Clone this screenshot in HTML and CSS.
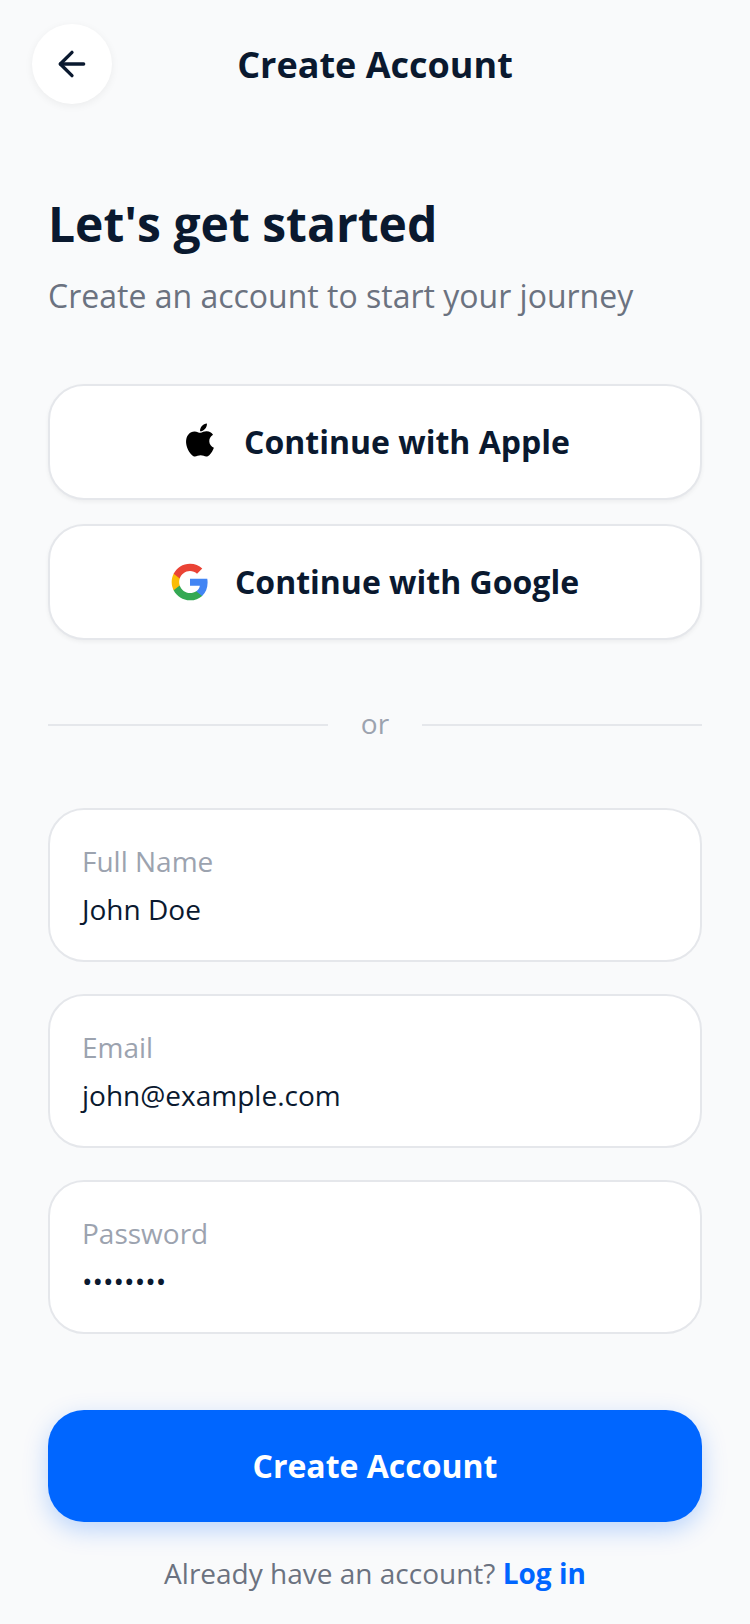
FILE: index.html
```html
<!DOCTYPE html>
<html lang="en">
<head>
<meta charset="utf-8">
<title>Create Account</title>
<link rel="stylesheet" href="styles.css">
</head>
<body>
<main class="screen">
  <header class="topbar">
    <button class="back" aria-label="Back">
      <svg class="back-icon" viewBox="0 0 24 24" fill="none" stroke="#0a192f" stroke-width="2" stroke-linecap="round" stroke-linejoin="round"><path d="M19 12H5"/><path d="M12 19l-7-7 7-7"/></svg>
    </button>
    <div class="topbar-title">Create Account</div>
  </header>
  <h1 class="heading">Let's get started</h1>
  <p class="sub">Create an account to start your journey</p>
  <div class="socials">
    <button class="social">
      <svg class="apple" viewBox="0 0 24 24" fill="#000"><path d="M17.05 20.28c-.98.95-2.05.8-3.08.35-1.09-.46-2.09-.48-3.24 0-1.44.62-2.2.44-3.06-.35C2.79 15.25 3.51 7.59 9.05 7.31c1.35.07 2.29.74 3.08.8 1.18-.24 2.31-.93 3.57-.84 1.51.12 2.65.72 3.4 1.8-3.12 1.87-2.38 5.98.48 7.13-.57 1.5-1.31 2.99-2.54 4.09zM12.03 7.25c-.15-2.23 1.66-4.07 3.74-4.25.29 2.58-2.34 4.5-3.74 4.25z"/></svg>
      <span>Continue with Apple</span>
    </button>
    <button class="social">
      <svg class="google" viewBox="0 0 24 24"><path fill="#4285F4" d="M22.56 12.25c0-.78-.07-1.53-.2-2.25H12v4.26h5.92c-.26 1.37-1.04 2.53-2.21 3.31v2.77h3.57c2.08-1.92 3.28-4.74 3.28-8.09z"/><path fill="#34A853" d="M12 23c2.97 0 5.46-.98 7.28-2.66l-3.57-2.77c-.98.66-2.23 1.06-3.71 1.06-2.86 0-5.29-1.93-6.16-4.53H2.18v2.84C3.99 20.53 7.7 23 12 23z"/><path fill="#FBBC05" d="M5.84 14.09c-.22-.66-.35-1.36-.35-2.09s.13-1.43.35-2.09V7.07H2.18C1.43 8.55 1 10.22 1 12s.43 3.45 1.18 4.93l3.66-2.84z"/><path fill="#EA4335" d="M12 5.38c1.62 0 3.06.56 4.21 1.64l3.15-3.15C17.45 2.09 14.97 1 12 1 7.7 1 3.99 3.47 2.18 7.07l3.66 2.84c.87-2.6 3.3-4.53 6.16-4.53z"/></svg>
      <span>Continue with Google</span>
    </button>
  </div>
  <div class="divider"><span class="rule"></span><span class="or">or</span><span class="rule"></span></div>
  <div class="fields">
    <div class="field"><div class="label">Full Name</div><div class="value">John Doe</div></div>
    <div class="field"><div class="label">Email</div><div class="value">john@example.com</div></div>
    <div class="field"><div class="label">Password</div><div class="value">••••••••</div></div>
  </div>
  <button class="primary">Create Account</button>
  <p class="footer">Already have an account? <a class="login" href="#">Log in</a></p>
</main>
</body>
</html>
```
FILE: styles.css
```css
* { box-sizing: border-box; }
html, body { margin: 0; padding: 0; }
body {
  width: 750px;
  height: 1624px;
  background: #f9fafb;
  font-family: "Open Sans", sans-serif;
  color: #0a192f;
  overflow: hidden;
}
button { font-family: inherit; cursor: pointer; }
.screen { display: flex; flex-direction: column; padding: 24px 48px 0; }
.topbar {
  position: relative;
  height: 80px;
  display: flex;
  align-items: center;
  justify-content: center;
}
.back {
  position: absolute;
  left: -16px;
  top: 0;
  width: 80px;
  height: 80px;
  border-radius: 50%;
  border: 0;
  background: #fff;
  box-shadow: 0 2px 8px rgba(0,0,0,0.06);
  display: flex;
  align-items: center;
  justify-content: center;
  padding: 0;
}
.back-icon { width: 40px; height: 40px; }
.topbar-title { font-size: 36px; font-weight: 700; line-height: 48px; padding-top: 2px; }
.heading { margin: 88px 0 0; font-size: 48px; font-weight: 700; line-height: 64px; }
.sub { margin: 18px 0 0; font-size: 32px; line-height: 44px; color: #6b7280; }
.socials { display: flex; flex-direction: column; gap: 24px; margin-top: 66px; }
.social {
  height: 116px;
  border-radius: 36px;
  border: 2px solid #e5e7eb;
  background: #fff;
  box-shadow: 0 2px 4px rgba(0,0,0,0.05);
  display: flex;
  align-items: center;
  justify-content: center;
  gap: 24px;
  font-size: 32px;
  font-weight: 700;
  color: #0a192f;
  padding: 0;
}
.social span { padding-bottom: 2px; }
.apple { width: 44px; height: 44px; margin: -4px -2px 0; }
.google { width: 40px; height: 40px; margin-left: -1px; margin-right: 1px; }
.divider { display: flex; align-items: center; gap: 33px; margin-top: 63px; height: 44px; }
.rule { flex: 1; height: 2px; background: #e5e7eb; }
.or { font-size: 28px; line-height: 40px; color: #9ca3af; padding-bottom: 4px; }
.fields { display: flex; flex-direction: column; gap: 32px; margin-top: 61px; }
.field {
  height: 154px;
  border-radius: 36px;
  border: 2px solid #e5e7eb;
  background: #fff;
  padding: 32px 32px 0;
}
.label { font-size: 28px; line-height: 38px; color: #9ca3af; }
.value { font-size: 28px; line-height: 42px; margin-top: 8px; color: #0a192f; }
.primary {
  margin-top: 76px;
  height: 112px;
  border: 0;
  border-radius: 36px;
  background: #0066ff;
  color: #fff;
  font-size: 32px;
  font-weight: 700;
  padding: 0 0 2px;
  box-shadow: 0 8px 24px rgba(0,102,255,0.25);
}
.footer { margin: 29px 0 0; text-align: center; font-size: 28px; line-height: 44px; color: #6b7280; }
.login { color: #0066ff; font-weight: 700; text-decoration: none; }
```
